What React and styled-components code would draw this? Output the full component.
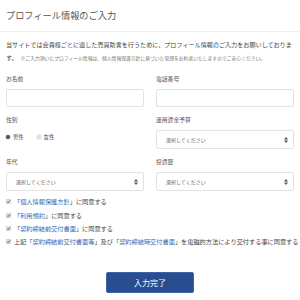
import React from 'react';
import styled, { createGlobalStyle } from 'styled-components';

const GlobalStyle = createGlobalStyle`
  html, body {
    margin: 0;
    padding: 0;
    background: #ffffff;
  }
  body {
    font-family: "Noto Sans CJK JP", "Noto Sans", sans-serif;
    color: #444;
  }
`;

const agreements = [
  { link: '個人情報保護方針', post: 'に同意する' },
  { link: '利用規約', post: 'に同意する' },
  { link: '契約締結前交付書面', post: 'に同意する' },
];

const Arrows = () => (
  <svg width="4" height="6" viewBox="0 0 4 6">
    <path d="M0 2.4 L2 0 L4 2.4 Z" fill="#555" />
    <path d="M0 3.6 L2 6 L4 3.6 Z" fill="#555" />
  </svg>
);

const CheckIcon = () => (
  <svg width="5" height="5" viewBox="0 0 10 10">
    <rect x="0.5" y="0.5" width="9" height="9" rx="1.5" fill="#eeeeee" stroke="#a8a8a8" />
    <path d="M2.2 5.2 L4.2 7.2 L7.9 2.8" fill="none" stroke="#333" strokeWidth="1.8" />
  </svg>
);

class App extends React.Component {
  render() {
    return (
      <Page>
        <GlobalStyle />
        <Header>
          <Title>プロフィール情報のご入力</Title>
        </Header>
        <Intro>
          当サイトでは会員様ごとに適した売買助言を行うために、プロフィール情報のご入力をお願いしております。
          <Note>※ご入力頂いたプロフィール情報は、個人情報保護方針に基づいた管理をお約束いたしますのでご安心ください。</Note>
        </Intro>

        <FormGrid>
          <Field>
            <Label>お名前</Label>
            <TextInput type="text" />
          </Field>
          <Field>
            <Label>電話番号</Label>
            <TextInput type="text" />
          </Field>

          <Field>
            <Label>性別</Label>
            <RadioRow>
              <RadioItem>
                <Radio $checked />
                男性
              </RadioItem>
              <RadioItem>
                <Radio />
                女性
              </RadioItem>
            </RadioRow>
          </Field>
          <Field>
            <Label>運用資金予算</Label>
            <Select>
              選択してください
              <Arrows />
            </Select>
          </Field>

          <Field>
            <Label>年代</Label>
            <Select>
              選択してください
              <Arrows />
            </Select>
          </Field>
          <Field>
            <Label>投資歴</Label>
            <Select>
              選択してください
              <Arrows />
            </Select>
          </Field>
        </FormGrid>

        <Agreements>
          {agreements.map((a) => (
            <CheckRow key={a.link}>
              <CheckIcon />
              <span>
                「<Link>{a.link}</Link>」{a.post}
              </span>
            </CheckRow>
          ))}
          <CheckRow>
            <CheckIcon />
            <span>
              上記「<Link>契約締結前交付書面等</Link>」及び「<Link>契約締結時交付書面</Link>」を電磁的方法により交付する事に同意する
            </span>
          </CheckRow>
        </Agreements>

        <ButtonWrap>
          <SubmitButton type="button">入力完了</SubmitButton>
        </ButtonWrap>
      </Page>
    );
  }
}

const Page = styled.div`
  width: 300px;
  height: 300px;
  overflow: hidden;
  background: #fff;
`;

const Header = styled.div`
  height: 31px;
  display: flex;
  align-items: center;
  padding: 0 6px;
  border-bottom: 1px solid #f0f0f0;
`;

const Title = styled.h1`
  margin: 0;
  font-size: 9.2px;
  font-weight: 400;
  color: #555;
  line-height: 1;
`;

const Intro = styled.p`
  margin: 0;
  padding: 6px 6px 0;
  font-size: 6.1px;
  line-height: 13px;
  color: #444;
`;

const Note = styled.span`
  margin-left: 3px;
  font-size: 4.8px;
  line-height: 6px;
  color: #777;
`;

const FormGrid = styled.div`
  display: grid;
  grid-template-columns: 138px 138px;
  column-gap: 12px;
  row-gap: 8px;
  padding: 0 6px;
  margin-top: 10px;
`;

const Field = styled.div`
  display: flex;
  flex-direction: column;
`;

const Label = styled.div`
  font-size: 5.8px;
  line-height: 10px;
  height: 10px;
  margin-bottom: 5px;
  color: #555;
`;

const TextInput = styled.input`
  box-sizing: border-box;
  width: 100%;
  height: 18px;
  margin: 0;
  border: 1px solid #e2e2e2;
  border-radius: 2px;
  background: #fff;
  outline: none;
`;

const Select = styled.div`
  box-sizing: border-box;
  height: 19px;
  display: flex;
  align-items: center;
  justify-content: space-between;
  padding: 0 5px 0 9px;
  border: 1px solid #e2e2e2;
  border-radius: 2px;
  font-size: 5px;
  color: #666;
`;

const RadioRow = styled.div`
  height: 19px;
  display: flex;
  align-items: center;
  gap: 13px;
  margin-top: -3px;
`;

const RadioItem = styled.label`
  display: flex;
  align-items: center;
  gap: 3px;
  font-size: 5.3px;
  color: #444;
`;

const Radio = styled.span`
  box-sizing: border-box;
  width: 4px;
  height: 4px;
  border-radius: 50%;
  background: ${(p) => (p.$checked ? '#555' : '#e4e4e4')};
  box-shadow: 0 0 0 0.5px ${(p) => (p.$checked ? '#bbb' : '#d8d8d8')};
`;

const Agreements = styled.div`
  padding: 0 6px;
  margin-top: 4px;
`;

const CheckRow = styled.div`
  display: flex;
  align-items: center;
  gap: 3px;
  height: 13.4px;
  font-size: 6.2px;
  color: #444;
  white-space: nowrap;

  svg {
    flex: none;
  }
`;

const Link = styled.span`
  color: #3b6db4;
`;

const ButtonWrap = styled.div`
  display: flex;
  justify-content: center;
  margin-top: 23px;
`;

const SubmitButton = styled.button`
  width: 88px;
  height: 21px;
  padding: 0;
  border: 1px solid #3d64a8;
  border-radius: 2px;
  background: #294d8f;
  color: #fff;
  font-family: "Noto Sans CJK JP", sans-serif;
  font-size: 8px;
  cursor: pointer;
`;

export default App;
